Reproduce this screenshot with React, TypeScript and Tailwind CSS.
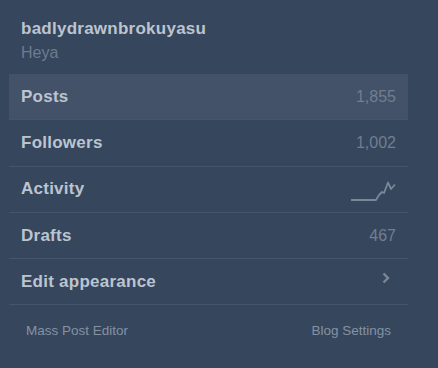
import React from "react";

const Row = ({
  label,
  active,
  right,
}: {
  label: string;
  active?: boolean;
  right: React.ReactNode;
}) => (
  <div
    className={`flex h-[46.3px] items-center justify-between border-b border-[#46556b] pl-3 pr-3 ${
      active ? "bg-[#435169]" : ""
    }`}
  >
    <span className="text-[17px] font-bold leading-5 tracking-[0.25px] text-[#bcc4cf]">{label}</span>
    {right}
  </div>
);

const Num = ({ v }: { v: string }) => (
  <span className="text-[16px] leading-5 text-[#717e91]">{v}</span>
);

export default function App() {
  return (
    <div
      className="min-h-[368px] w-[438px] bg-[#36465d]"
      style={{ fontFamily: '"Liberation Sans", Arial, sans-serif' }}
    >
      <div className="px-[21px] pt-[19px]">
        <div className="text-[17px] font-bold leading-5 tracking-[0.25px] text-[#bcc4cf]">badlydrawnbrokuyasu</div>
        <div className="mt-[4px] text-[16px] leading-5 text-[#6e7b8e]">Heya</div>
      </div>
      <div className="mx-[9px] mt-[11px] w-[399px]">
        <Row label="Posts" active right={<Num v="1,855" />} />
        <Row label="Followers" right={<Num v="1,002" />} />
        <Row
          label="Activity"
          right={
            <svg width="46" height="20" viewBox="0 0 46 20" className="mr-[-1px] mt-[4px]">
              <polyline
                points="0,19 25,19 28,14 31,11 33,12 37,1.5 40,8 44,3.5"
                fill="none"
                stroke="#7b8797"
                strokeWidth="1.8"
                strokeLinejoin="round"
              />
            </svg>
          }
        />
        <Row label="Drafts" right={<Num v="467" />} />
        <Row
          label="Edit appearance"
          right={
            <svg width="8" height="12" viewBox="0 0 8 12" className="mr-[6px] mt-[-8px]">
              <polyline
                points="1.5,1.5 6,6 1.5,10.5"
                fill="none"
                stroke="#7b8797"
                strokeWidth="2.4"
              />
            </svg>
          }
        />
        <div className="flex items-center justify-between px-[17px] pt-[16px]">
          <span className="text-[13.5px] leading-5 text-[#8592a3]">Mass Post Editor</span>
          <span className="text-[13.5px] leading-5 text-[#8592a3]">Blog Settings</span>
        </div>
      </div>
    </div>
  );
}
